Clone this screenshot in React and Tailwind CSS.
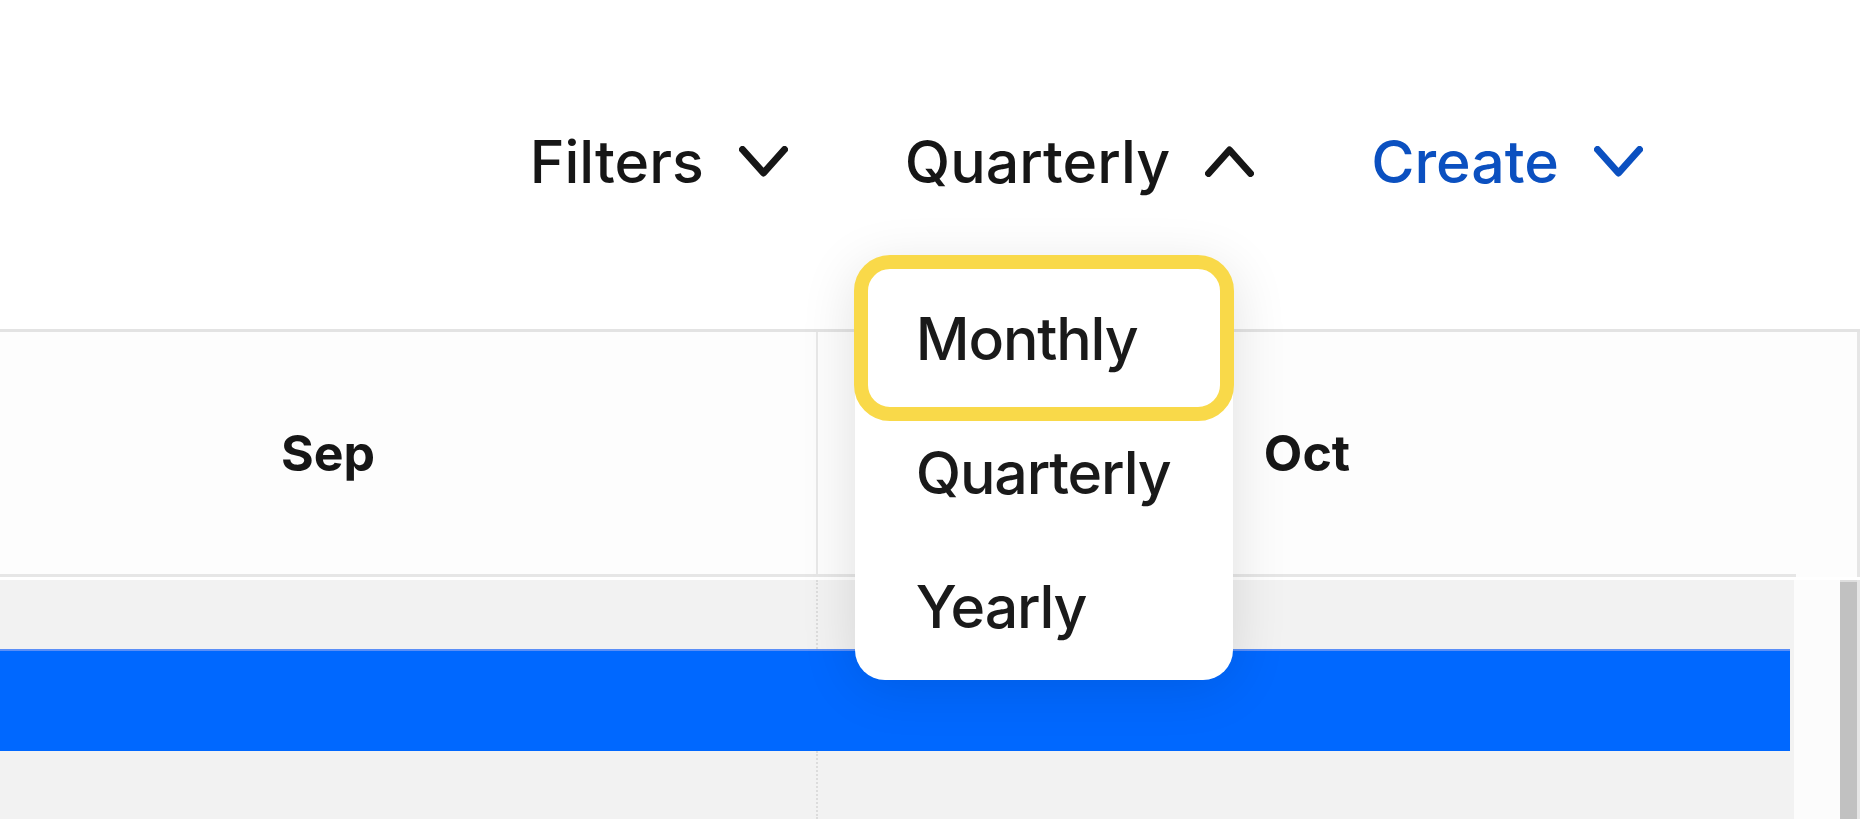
import React from 'react';

const Chevron = ({ up = false, className = '' }) => (
  <svg width="49" height="31" viewBox="0 0 49 31" fill="none" className={className}>
    <polyline
      points={up ? '3.5,27.5 24.5,4 45.5,27.5' : '3.5,3.5 24.5,27 45.5,3.5'}
      stroke="currentColor"
      strokeWidth="7"
      strokeLinecap="round"
      strokeLinejoin="round"
    />
  </svg>
);

const MenuItem = ({ label, active = false }) => (
  <div
    className={`h-[134px] flex items-center pl-[46px] text-[59px] leading-none tracking-[-0.02em] text-[#1a1a1a] rounded-[20px] ${
      active ? 'outline-[14px] outline-[#f9d949] outline-offset-[2px]' : ''
    }`}
  >
    {label}
  </div>
);

const PeriodMenu = () => (
  <div className="absolute left-[-50px] top-[130px] z-10 w-[378px] bg-white rounded-[30px] px-[15px] pt-[9px] pb-[7px] shadow-[0_6px_56px_rgba(0,0,0,0.12)]">
    <MenuItem label="Monthly" active />
    <MenuItem label="Quarterly" />
    <MenuItem label="Yearly" />
  </div>
);

const Toolbar = () => (
  <div className="h-[329px] flex justify-end items-start pt-[132px] pr-[217px] gap-[117px] text-[59px] leading-none font-medium">
    <button className="flex items-center gap-[35px] h-[59px] text-[#161616]">
      <span>Filters</span>
      <Chevron />
    </button>
    <div className="relative">
      <button className="flex items-center gap-[35px] h-[59px] text-[#161616]">
        <span>Quarterly</span>
        <Chevron up />
      </button>
      <PeriodMenu />
    </div>
    <button className="flex items-center gap-[35px] h-[59px] text-[#0b50c0]">
      <span>Create</span>
      <Chevron />
    </button>
  </div>
);

const BodyRow = ({ tall = false }) => (
  <div className={`flex ${tall ? 'h-[68px]' : 'h-[69px]'}`}>
    <div className="w-[978px] border-r-2 border-dotted border-[#dcdcdc]" />
    <div className="flex-1" />
  </div>
);

export default function App() {
  return (
    <div className="w-[1860px] h-[819px] overflow-hidden bg-white font-['Inter',sans-serif]">
      <Toolbar />
      <div className="border-t-[3px] border-[#e3e3e3]">
        <div className="flex h-[245px] bg-[#fdfdfd] border-r-[3px] border-[#e6e6e6]">
          <div className="flex -ml-[160px] w-[1956px] border-b-[3px] border-[#e6e6e6] text-[50px] font-bold text-[#161616]">
            <div className="w-[978px] flex items-center justify-center border-r-2 border-[#e8e8e8]">Sep</div>
            <div className="w-[978px] flex items-center justify-center">Oct</div>
          </div>
          <div className="flex-1" />
        </div>
        <div className="flex mt-[3px] bg-[#fcfcfc]">
          <div className="w-[1794px] overflow-hidden bg-[#f2f2f2]">
            <div className="-ml-[160px] w-[1954px]">
              <BodyRow />
              <div className="h-[102px] mr-[4px] bg-[#0068ff] border-t-2 border-[#5b8ff7]" />
              <BodyRow tall />
            </div>
          </div>
          <div className="flex-1 flex justify-end">
            <div className="w-[17px] h-[239px] bg-[#c1c1c1] border-t-2 border-[#dedede]" />
            <div className="w-[3px] bg-[#e6e6e6]" />
          </div>
        </div>
      </div>
    </div>
  );
}
